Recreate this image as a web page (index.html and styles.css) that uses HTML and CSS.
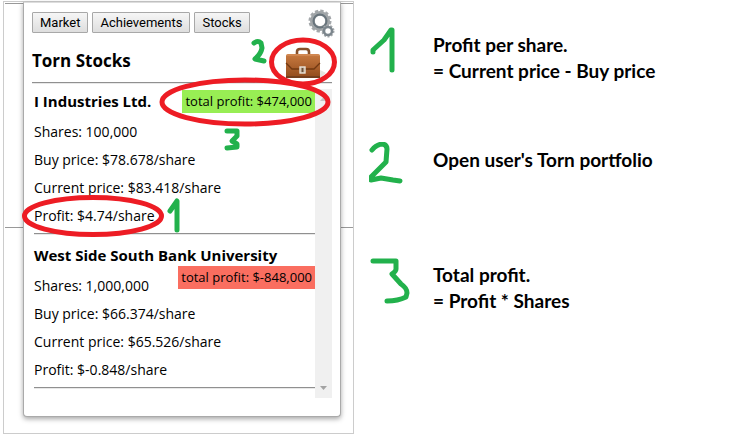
FILE: index.html
```html
<!DOCTYPE html>
<html lang="en">
<head>
<meta charset="utf-8">
<title>Torn Stocks</title>
<link rel="stylesheet" href="styles.css">
</head>
<body>
<main class="guide">
  <section class="preview">
    <div class="panel">
      <header class="panel-header">
        <nav class="tabs">
          <button type="button">Market</button>
          <button type="button">Achievements</button>
          <button type="button">Stocks</button>
        </nav>
        <button type="button" class="icon-button" aria-label="Settings">
          <svg width="28" height="30" viewBox="0 0 28 30" fill="none">
            <circle cx="12" cy="12" r="10" stroke="#a4a8ab" stroke-width="3" stroke-dasharray="3.2 2.03"/>
            <circle cx="12" cy="12" r="7.5" stroke="#a0a5a8" stroke-width="5"/>
            <circle cx="12" cy="12" r="6.5" stroke="#68747c" stroke-width="2"/>
            <circle cx="12" cy="12" r="5" fill="#fff"/>
            <circle cx="20" cy="22" r="5.500" stroke="#a4a8ab" stroke-width="2" stroke-dasharray="2 1.455"/>
            <circle cx="20" cy="22" r="4" fill="#fff" stroke="#7c868d" stroke-width="2.6"/>
          </svg>
        </button>
      </header>
      <div class="title-row">
        <h1>Torn Stocks</h1>
        <a href="#portfolio" class="portfolio" aria-label="Open portfolio">
          <svg width="42" height="32" viewBox="0 0 42 32">
            <defs>
              <linearGradient id="leather" x2="0" y2="1">
                <stop offset="0" stop-color="#c87a40"/><stop offset="1" stop-color="#914b1c"/>
              </linearGradient>
            </defs>
            <path d="M35 23l6 3-5 4H6z" fill="#e5e5df"/>
            <path d="M12 8V5q0-3 3-3h6q3 0 3 3v3" fill="none" stroke="#86502a" stroke-width="2.6"/>
            <rect x="1" y="7" width="34" height="24" rx="2" fill="url(#leather)"/>
            <path d="M1 30h34" stroke="#74401e" stroke-width="2"/>
            <path d="M1 16l6 6h22l6-6" fill="none" stroke="#713811" stroke-width="1.3"/>
            <path d="M2 8h32" stroke="#da9662"/>
            <rect x="15" y="20" width="5" height="6" fill="#a58a70" stroke="#e9e3d9" stroke-width="1.4"/>
            <path d="M17.5 21v4" stroke="#65503f"/>
          </svg>
        </a>
      </div>
      <hr>
      <div class="list-area">
        <div class="stocks">
          <article class="stock">
            <h2>I Industries Ltd.</h2>
            <span class="total gain">total profit: $474,000</span>
            <ul>
              <li>Shares: 100,000</li>
              <li>Buy price: $78.678/share</li>
              <li>Current price: $83.418/share</li>
              <li>Profit: $4.74/share</li>
            </ul>
            <hr>
          </article>
          <article class="stock">
            <h2>West Side South Bank University</h2>
            <span class="total loss">total profit: $-848,000</span>
            <ul>
              <li>Shares: 1,000,000</li>
              <li>Buy price: $66.374/share</li>
              <li>Current price: $65.526/share</li>
              <li>Profit: $-0.848/share</li>
            </ul>
            <hr>
          </article>
        </div>
        <div class="scroll-track" aria-hidden="true">
          <svg width="9" height="5" viewBox="0 0 9 5"><path d="M1 5l3.500-4L8 5z" fill="#c4c4c4"/></svg>
          <svg width="9" height="5" viewBox="0 0 9 5"><path d="M1 0h7L4.500 4z" fill="#a3a3a3"/></svg>
        </div>
      </div>
    </div>
    <svg class="marks" width="354" height="434" viewBox="0 0 354 434" fill="none" stroke-linecap="round" stroke-linejoin="round" aria-hidden="true">
      <g stroke="#ed1c24" stroke-width="5">
        <ellipse cx="303" cy="62" rx="31.500" ry="22"/>
        <ellipse cx="245" cy="102" rx="83" ry="22"/>
        <ellipse cx="93" cy="216" rx="68.500" ry="18.500"/>
      </g>
      <g stroke="#22b14c" stroke-width="5">
        <path d="M254 43Q258 40 261 43L262 48Q261 54 255 59L264 61"/>
        <path d="M227 131H237V136L232 141L237 144V147L227 148"/>
        <path d="M170 211L177 201V230"/>
      </g>
    </svg>
  </section>
  <ol class="callouts">
    <li>
      <svg width="42" height="48" viewBox="0 0 42 48"><path d="M4 25V23L15 13L22 3L23 3V43"/></svg>
      <p>Profit per share.<br>= Current price - Buy price</p>
    </li>
    <li>
      <svg width="42" height="48" viewBox="0 0 42 48"><path d="M3 8Q8 2 14 2Q18 3 18 7L17 20L2 35V38L12 36L24 38L31 39"/></svg>
      <p>Open user's Torn portfolio</p>
    </li>
    <li>
      <svg width="42" height="48" viewBox="0 0 42 48"><path d="M4 4H27V12Q27 14 23 17L32 27Q38 31 38 36L37 40Q29 44 18 44"/></svg>
      <p>Total profit.<br>= Profit * Shares</p>
    </li>
  </ol>
</main>
</body>
</html>
```
FILE: styles.css
```css
* { box-sizing: border-box; }

body {
  margin: 0;
  background: #fff;
  color: #000;
  font: 14px/28px "Open Sans", "Noto Sans", sans-serif;
}

h1, h2, p, ul, ol { margin: 0; padding: 0; }
ul, ol { list-style: none; }

hr {
  height: 2px;
  margin: 0;
  border: 0;
  border-top: 1px solid #909090;
  background: #e8e8e8;
}

.guide {
  display: flex;
  align-items: flex-start;
  padding: 1px 3px;
}

.preview {
  position: relative;
  flex: 0 0 351px;
  padding: 0 12px 16px 19px;
  border: 1px solid #ccc;
  background:
    linear-gradient(#999, #999) 1px 1px / 348px 1px no-repeat,
    linear-gradient(#999, #999) 1px 225px / 348px 1px no-repeat;
}

.panel {
  padding: 9px 8px 18px;
  border: 1px solid #aaa;
  border-top-color: #ddd;
  border-radius: 0 0 4px 4px;
  background: #fff;
  box-shadow: 0 2px 5px rgba(0, 0, 0, 0.35);
}

.panel-header {
  display: flex;
  justify-content: space-between;
  height: 28px;
}

.tabs {
  display: flex;
  align-items: flex-start;
  gap: 4px;
}

.tabs button {
  height: 21px;
  padding: 0 7px;
  border: 1px solid #a8a8a8;
  border-radius: 1px;
  background: linear-gradient(#f6f6f6, #dedede);
  font: 13px/18px Roboto, sans-serif;
  color: #000;
}

.icon-button {
  height: 30px;
  margin-top: -3px;
  margin-right: -4px;
  padding: 0;
  border: 0;
  background: none;
}

.icon-button svg, .portfolio svg { display: block; }

.title-row {
  display: flex;
  align-items: flex-start;
  justify-content: space-between;
  height: 42px;
}

h1 { padding-top: 7px; font-size: 17px; line-height: 28px; }

.portfolio { margin-top: 7px; margin-right: 5px; }

.list-area { display: flex; padding-top: 5px; }

.stocks { flex: 1; padding: 1px 0 0 2px; }

.stock { margin-bottom: 9px; line-height: 22px; }

h2 {
  display: inline-block;
  font-size: 15px;
  line-height: 22px;
  vertical-align: top;
}

.total {
  float: right;
  padding: 0 3px;
  font-size: 13px;
  line-height: 23px;
}

.gain { background: #98ee54; }
.loss { background: #fa6e60; }

.stock ul { padding: 6px 0 3px; line-height: 28px; }

.scroll-track {
  display: flex;
  flex-direction: column;
  align-items: center;
  justify-content: space-between;
  width: 17px;
  padding: 7px 0;
  background: #f0f0f0;
}

.marks { position: absolute; top: -2px; left: -4px; }

.callouts { padding: 26px 0 0 15px; }

.callouts li {
  display: flex;
  align-items: flex-start;
  gap: 22px;
  min-height: 115px;
}

.callouts svg {
  fill: none;
  stroke: #22b14c;
  stroke-width: 5;
  stroke-linecap: round;
  stroke-linejoin: round;
}

.callouts p {
  padding-top: 5px;
  font: bold 19px/26px Lato, sans-serif;
}
```
